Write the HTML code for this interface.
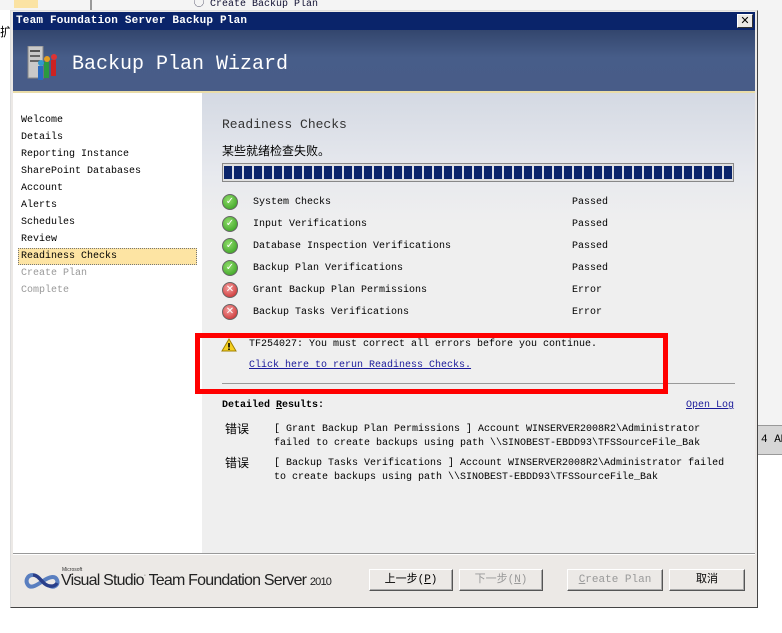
<!DOCTYPE html>
<html><head><meta charset="utf-8"><style>
*{margin:0;padding:0;box-sizing:border-box}
body{width:782px;height:633px;background:#fff;position:relative;overflow:hidden;font-family:"Liberation Mono","Noto Sans CJK SC",monospace;font-size:10px;color:#000}
.a{position:absolute;white-space:nowrap}
.btn{position:absolute;height:22px;background:#ece9e6;border:1px solid;border-color:#fff #555 #555 #fff;box-shadow:inset -1px -1px 0 #aaa;text-align:center;line-height:20px;font-size:11px}
.ok,.er{position:absolute;left:222px;width:16px;height:16px;border-radius:50%;border:1px solid #666;color:#fff;font-size:10px;font-weight:bold;text-align:center;line-height:14px;font-family:"DejaVu Sans",sans-serif}
.ok{background:radial-gradient(circle at 40% 35%,#8fdc6a,#2f9a1a)}
.er{background:radial-gradient(circle at 40% 35%,#f4a0a0,#c52020)}
.nav{position:absolute;left:21px;font-size:10px}
</style></head><body>
<div class="a" style="left:0;top:0;width:782px;height:10px;background:#f4f4f4"></div>
<div class="a" style="left:14px;top:0;width:24px;height:8px;background:#fbe3a3"></div>
<div class="a" style="left:90px;top:0;width:2px;height:10px;background:#999"></div>
<div class="a" style="left:194px;top:-6px;font-size:10px;color:#113">◯ Create Backup Plan</div>
<div class="a" style="left:0;top:23px;font-size:12px">扩</div>
<div class="a" style="left:758px;top:10px;width:24px;height:415px;background:#f3f3f3"></div>
<div class="a" style="left:758px;top:425px;width:24px;height:30px;background:#d6d6d6;border-top:1px solid #999;border-bottom:1px solid #999;font-size:11px;line-height:28px;padding-left:3px">4 AM</div>
<div class="a" style="left:10px;top:10px;width:748px;height:598px;background:#ece9e6;border:1px solid;border-color:#ddd #444 #444 #ddd"></div>
<div class="a" style="left:13px;top:12px;width:742px;height:18px;background:#0a246a;color:#fff;font-weight:bold;font-size:11px;line-height:18px;padding-left:3px;letter-spacing:0.2px">Team Foundation Server Backup Plan</div>
<div class="a" style="left:737px;top:14px;width:16px;height:14px;background:#ece9e6;border:1px solid;border-color:#fff #333 #333 #fff;font-size:11px;font-weight:bold;text-align:center;line-height:12px;font-family:'DejaVu Sans',sans-serif">✕</div>
<div class="a" style="left:13px;top:30px;width:742px;height:61px;background:linear-gradient(#33466d,#475d89 45%,#485c88)"></div>
<div class="a" style="left:13px;top:91px;width:742px;height:2px;background:#e9dca8"></div>
<svg class="a" style="left:27px;top:46px" width="32" height="34"><rect x="1" y="0" width="15" height="32" fill="#c9c9c9" stroke="#888"/><rect x="3" y="4" width="10" height="2" fill="#555"/><rect x="3" y="9" width="10" height="2" fill="#666"/><rect x="3" y="14" width="10" height="2" fill="#666"/><circle cx="20" cy="13" r="3" fill="#e6a020"/><rect x="17" y="16" width="5" height="16" fill="#2a9a40"/><circle cx="27" cy="11" r="3" fill="#d33"/><rect x="24" y="14" width="5" height="16" fill="#c22"/><circle cx="14" cy="17" r="3" fill="#39c"/><rect x="11" y="20" width="5" height="14" fill="#2a6ac0"/></svg>
<div class="a" style="left:72px;top:53px;color:#fff;font-size:20px">Backup Plan Wizard</div>
<div class="a" style="left:13px;top:93px;width:189px;height:460px;background:#fff"></div>
<div class="a" style="left:18px;top:248px;width:179px;height:17px;background:#fde4a3;border:1px dotted #777"></div>
<div class="nav" style="top:115px">Welcome</div>
<div class="nav" style="top:132px">Details</div>
<div class="nav" style="top:149px">Reporting Instance</div>
<div class="nav" style="top:166px">SharePoint Databases</div>
<div class="nav" style="top:183px">Account</div>
<div class="nav" style="top:200px">Alerts</div>
<div class="nav" style="top:217px">Schedules</div>
<div class="nav" style="top:234px">Review</div>
<div class="nav" style="top:251px">Readiness Checks</div>
<div class="nav" style="top:268px;color:#999">Create Plan</div>
<div class="nav" style="top:285px;color:#999">Complete</div>
<div class="a" style="left:202px;top:93px;width:553px;height:460px;background:linear-gradient(#d4d9e3,#e7e9ee 80px,#efefef 130px,#efefef)"></div>
<div class="a" style="left:222px;top:117px;font-size:13px;color:#333">Readiness Checks</div>
<div class="a" style="left:222px;top:142px;font-size:12px;font-family:'Noto Sans CJK SC',sans-serif;line-height:18px">某些就绪检查失败。</div>
<div class="a" style="left:222px;top:163px;width:512px;height:19px;border:1px solid #888;background:#e0e0e0;padding:2px 1px;"><div style="width:100%;height:100%;background:repeating-linear-gradient(90deg,#0a246a 0 8px,#d8dce6 8px 10px)"></div></div>
<div class="ok" style="top:194px">✓</div><div class="a" style="left:253px;top:197px">System Checks</div><div class="a" style="left:572px;top:197px">Passed</div>
<div class="ok" style="top:216px">✓</div><div class="a" style="left:253px;top:219px">Input Verifications</div><div class="a" style="left:572px;top:219px">Passed</div>
<div class="ok" style="top:238px">✓</div><div class="a" style="left:253px;top:241px">Database Inspection Verifications</div><div class="a" style="left:572px;top:241px">Passed</div>
<div class="ok" style="top:260px">✓</div><div class="a" style="left:253px;top:263px">Backup Plan Verifications</div><div class="a" style="left:572px;top:263px">Passed</div>
<div class="er" style="top:282px">✕</div><div class="a" style="left:253px;top:285px">Grant Backup Plan Permissions</div><div class="a" style="left:572px;top:285px">Error</div>
<div class="er" style="top:304px">✕</div><div class="a" style="left:253px;top:307px">Backup Tasks Verifications</div><div class="a" style="left:572px;top:307px">Error</div>
<svg class="a" style="left:221px;top:338px" width="16" height="14"><path d="M8 1L15 13H1Z" fill="#f5d020" stroke="#a08000"/><rect x="7.2" y="5" width="1.6" height="4.5" fill="#000"/><rect x="7.2" y="10.5" width="1.6" height="1.5" fill="#000"/></svg>
<div class="a" style="left:249px;top:339px">TF254027: You must correct all errors before you continue.</div>
<div class="a" style="left:249px;top:360px;color:#1a1a9a;text-decoration:underline">Click here to rerun Readiness Checks.</div>
<div class="a" style="left:222px;top:383px;width:513px;height:1px;background:#999"></div>
<div class="a" style="left:195px;top:333px;width:473px;height:61px;border:5px solid #f00"></div>
<div class="a" style="left:222px;top:400px;font-weight:bold">Detailed <u>R</u>esults:</div>
<div class="a" style="left:686px;top:400px;color:#1a1a9a;text-decoration:underline">Open Log</div>
<div class="a" style="left:225px;top:420px;font-size:12px;font-family:'Noto Sans CJK SC',sans-serif">错误</div>
<div class="a" style="left:274px;top:423px;line-height:14px">[ Grant Backup Plan Permissions ] Account WINSERVER2008R2\Administrator<br>failed to create backups using path \\SINOBEST-EBDD93\TFSSourceFile_Bak</div>
<div class="a" style="left:225px;top:454px;font-size:12px;font-family:'Noto Sans CJK SC',sans-serif">错误</div>
<div class="a" style="left:274px;top:457px;line-height:14px">[ Backup Tasks Verifications ] Account WINSERVER2008R2\Administrator failed<br>to create backups using path \\SINOBEST-EBDD93\TFSSourceFile_Bak</div>
<div class="a" style="left:13px;top:553px;width:742px;height:1px;background:#999"></div>
<div class="a" style="left:13px;top:554px;width:742px;height:1px;background:#fff"></div>
<svg class="a" style="left:24px;top:571px" width="38" height="20"><path d="M9 4C3 4 1 10 4 14C7 18 13 14 19 10C25 6 31 4 33 9C35 14 30 17 26 15" fill="none" stroke="#5a7fc0" stroke-width="4"/><path d="M9 4C14 4 17 10 21 13C25 16 31 16 33 12" fill="none" stroke="#2a3f8a" stroke-width="3.5"/></svg>
<div class="a" style="left:62px;top:567px;font-size:5px;color:#333;font-family:'Liberation Sans',sans-serif">Microsoft</div>
<div class="a" style="left:61px;top:572px;font-size:16px;color:#222;font-family:'Liberation Sans',sans-serif;letter-spacing:-0.8px">Visual Studio<span style="font-size:7px;vertical-align:top">·</span> Team Foundation Server <span style="font-size:11px">2010</span></div>
<div class="btn" style="left:369px;top:569px;width:84px">上一步(<u>P</u>)</div>
<div class="btn" style="left:459px;top:569px;width:84px;color:#999">下一步(<u>N</u>)</div>
<div class="btn" style="left:567px;top:569px;width:96px;color:#999"><u>C</u>reate Plan</div>
<div class="btn" style="left:669px;top:569px;width:76px">取消</div>
</body></html>
